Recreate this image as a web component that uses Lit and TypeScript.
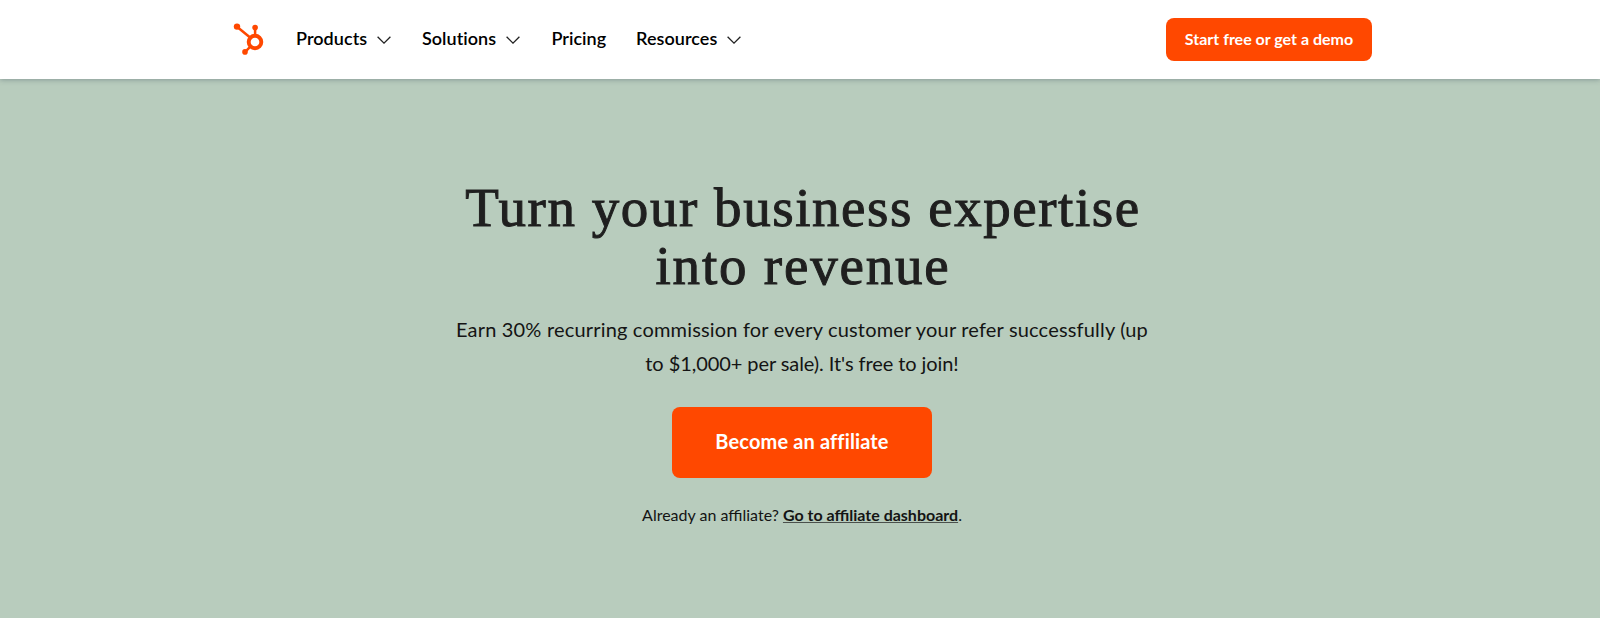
import { LitElement, html, css } from "lit";

const NAV = [
  { id: "products", label: "Products", menu: true },
  { id: "solutions", label: "Solutions", menu: true },
  { id: "pricing", label: "Pricing", menu: false },
  { id: "resources", label: "Resources", menu: true },
];

class SiteHeader extends LitElement {
  static styles = css`
    :host { display: block; position: relative; z-index: 1; background: #fff; box-shadow: 0 1px 5px rgba(45, 62, 80, 0.35); }
    .bar { display: flex; align-items: center; height: 79px; padding: 0 228px 0 233px; box-sizing: border-box; }
    .logo { display: block; width: 32px; height: 33px; margin-bottom: 1px; flex: none; }
    .nav { display: flex; margin-left: 31px; padding-bottom: 3px; flex: 1; }
    .item { display: flex; align-items: center; color: #000; text-decoration: none; font-size: 18px; font-weight: 600; line-height: 24px; white-space: nowrap; box-sizing: border-box; }
    .products { width: 126px; letter-spacing: 0.05px; }
    .solutions { width: 129.5px; letter-spacing: 0.03px; }
    .pricing { width: 84.5px; }
    .resources { width: 110px; letter-spacing: 0.06px; }
    .chevron { width: 14px; height: 8px; margin: 4px 0 0 9.5px; flex: none; }
    .cta { width: 206px; height: 43px; margin-bottom: 1px; box-sizing: border-box; border-radius: 8px; background: #ff4800; color: #fff; text-align: center; text-decoration: none; font-size: 16px; font-weight: 700; line-height: 42px; white-space: nowrap; }
  `;
  render() {
    return html`<header class="bar">
      <svg class="logo" viewBox="8 8 32 33" fill="none" stroke="#ff4800" aria-label="HubSpot">
        <path d="M12 11.7 24.8 22.2M30.1 13V20M25.8 31.2 20.2 36.8" stroke-width="2.5" />
        <circle cx="30" cy="27" r="6.3" stroke-width="3.9" />
        <g fill="#ff4800" stroke="none">
          <circle cx="12" cy="11.6" r="3.2" /><circle cx="30.1" cy="12.6" r="2.8" /><circle cx="20" cy="36.9" r="2.8" />
        </g>
      </svg>
      <nav class="nav">${NAV.map((n) => html`<a class="item ${n.id}" href="#">${n.label}${n.menu
        ? html`<svg class="chevron" viewBox="0 0 14 8" fill="none" stroke="#222" stroke-width="1.3"><path d="M.6.7 7 7.1 13.4.7" /></svg>`
        : null}</a>`)}</nav>
      <a class="cta" href="#">Start free or get a demo</a>
    </header>`;
  }
}
customElements.define("site-header", SiteHeader);

class AppRoot extends LitElement {
  static styles = css`
    :host { display: flex; flex-direction: column; height: 618px; overflow: hidden; background: #b8ccbd; font-family: Lato, "Open Sans", sans-serif; color: #141414; }
    .hero { display: flex; flex-direction: column; align-items: center; flex: 1; padding-top: 100px; padding-left: 4px; text-align: center; }
    .title { margin: 0; padding-left: 2px; font-family: "Liberation Serif", serif; font-size: 55px; font-weight: 400; line-height: 58px; letter-spacing: 1.55px; color: #1f1f1f; -webkit-text-stroke: 1px #1f1f1f; }
    .line { display: block; white-space: nowrap; }
    .wide { letter-spacing: 1.8px; }
    .sub { margin: 18px 0 0; font-size: 20px; line-height: 33.5px; letter-spacing: 0.18px; }
    .tight { letter-spacing: -0.08px; }
    .button { width: 260px; height: 71px; margin-top: 27px; box-sizing: border-box; border-radius: 8px; background: #ff4800; color: #fff; text-decoration: none; font-size: 20px; font-weight: 700; line-height: 69px; letter-spacing: 0.14px; }
    .note { margin: 25px 0 0; font-size: 16px; line-height: 24px; white-space: pre; }
    .link { color: #141414; font-weight: 700; text-decoration: underline #4a504c; text-decoration-thickness: 1px; text-underline-offset: 1px; text-decoration-skip-ink: none; }
  `;
  render() {
    return html`<site-header></site-header>
      <main class="hero">
        <h1 class="title"><span class="line">Turn your business expertise</span><span class="line wide">into revenue</span></h1>
        <p class="sub"><span class="line">Earn 30% recurring commission for every customer your refer successfully (up</span><span class="line tight">to $1,000+ per sale). It's free to join!</span></p>
        <a class="button" href="#">Become an affiliate</a>
        <p class="note">Already an affiliate? <a class="link" href="#">Go to affiliate dashboard</a>.</p>
      </main>`;
  }
}
customElements.define("app-root", AppRoot);
